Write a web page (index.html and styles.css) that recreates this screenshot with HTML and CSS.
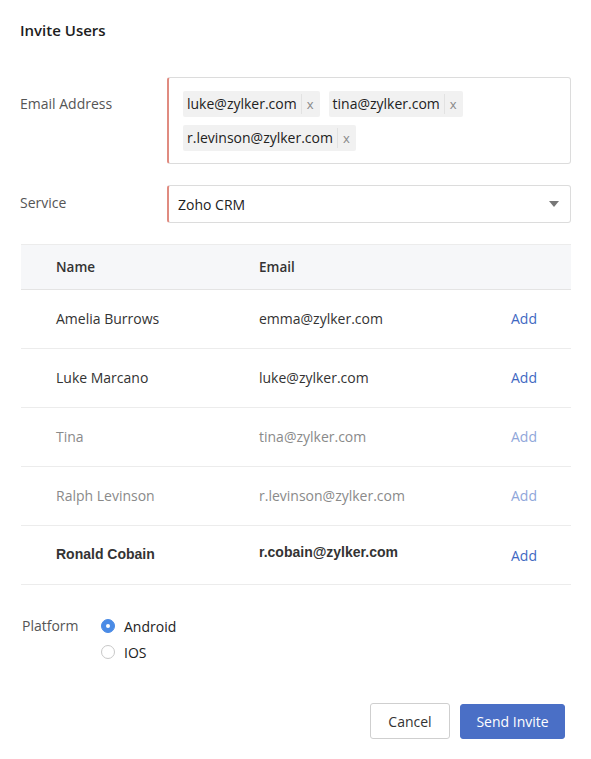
FILE: index.html
```html
<!DOCTYPE html>
<html>
<head>
<meta charset="utf-8">
<link rel="stylesheet" href="styles.css">
</head>
<body>
<div class="dialog">
  <h1 class="title">Invite Users</h1>

  <div class="field field-email">
    <label class="label">Email Address</label>
    <div class="control tags">
      <span class="chip"><span class="chip-text">luke@zylker.com</span><span class="chip-x">x</span></span>
      <span class="chip"><span class="chip-text">tina@zylker.com</span><span class="chip-x">x</span></span>
      <span class="chip"><span class="chip-text">r.levinson@zylker.com</span><span class="chip-x">x</span></span>
    </div>
  </div>

  <div class="field field-service">
    <label class="label">Service</label>
    <div class="control select">
      <span>Zoho CRM</span>
      <svg class="caret" width="10" height="6" viewBox="0 0 10 6"><path d="M0 0h10L5 6z" fill="#777"/></svg>
    </div>
  </div>

  <div class="table">
    <div class="row head">
      <span class="c-name">Name</span>
      <span class="c-email">Email</span>
      <span class="c-act"></span>
    </div>
    <div class="row">
      <span class="c-name">Amelia Burrows</span>
      <span class="c-email">emma@zylker.com</span>
      <span class="c-act">Add</span>
    </div>
    <div class="row">
      <span class="c-name">Luke Marcano</span>
      <span class="c-email">luke@zylker.com</span>
      <span class="c-act">Add</span>
    </div>
    <div class="row muted">
      <span class="c-name">Tina</span>
      <span class="c-email">tina@zylker.com</span>
      <span class="c-act">Add</span>
    </div>
    <div class="row muted">
      <span class="c-name">Ralph Levinson</span>
      <span class="c-email">r.levinson@zylker.com</span>
      <span class="c-act">Add</span>
    </div>
    <div class="row strong">
      <span class="c-name">Ronald Cobain</span>
      <span class="c-email">r.cobain@zylker.com</span>
      <span class="c-act">Add</span>
    </div>
  </div>

  <div class="platform">
    <span class="label">Platform</span>
    <div class="radios">
      <div class="radio on"><span class="dot"></span>Android</div>
      <div class="radio"><span class="dot"></span>IOS</div>
    </div>
  </div>

  <div class="actions">
    <button class="btn btn-cancel">Cancel</button>
    <button class="btn btn-primary">Send Invite</button>
  </div>
</div>
</body>
</html>
```

FILE: styles.css
```css
* { box-sizing: border-box; }

html, body {
  margin: 0;
  background: #fff;
}

body {
  font-family: "Open Sans", "Liberation Sans", sans-serif;
  font-size: 14px;
  color: #222;
}

.dialog {
  width: 591px;
  padding: 19px 20px 0 20px;
}

.title {
  margin: 0;
  font-size: 15px;
  font-weight: 600;
  line-height: 22px;
  color: #1d1d1d;
}

.field {
  display: flex;
  align-items: flex-start;
}

.field-email { margin-top: 36px; }
.field-service { margin-top: 21px; }

.label {
  width: 147px;
  flex: none;
  font-size: 14px;
  color: #555;
}

.field-email .label { padding-top: 17px; }
.field-service .label { padding-top: 8px; }

.control {
  flex: 1;
  border: 1px solid #dcdcdc;
  border-left: 2px solid #e08b80;
  border-radius: 3px;
  background: #fff;
}

.tags {
  height: 87px;
  padding: 13px 14px 0 14px;
  display: flex;
  flex-wrap: wrap;
  align-content: flex-start;
  column-gap: 9px;
  row-gap: 8px;
}

.chip {
  display: inline-flex;
  align-items: stretch;
  height: 26px;
  background: #f1f1f1;
  border-radius: 2px;
  font-size: 14px;
  color: #222;
}

.chip-text {
  padding: 0 4px 0 4px;
  border-right: 1px solid #e2e2e2;
  margin: 3px 0;
  line-height: 20px;
}

.chip-x {
  padding: 0 6px 0 5px;
  line-height: 26px;
  font-size: 13px;
  color: #888;
}

.select {
  height: 38px;
  padding: 0 10px 0 9px;
  display: flex;
  align-items: center;
  justify-content: space-between;
  font-size: 14px;
  color: #222;
}

.caret { margin-right: 1px; }

.table {
  margin-top: 21px;
  margin-left: 1px;
  width: 550px;
}

.row {
  display: flex;
  align-items: center;
  height: 59px;
  padding-bottom: 1px;
  border-bottom: 1px solid #ececec;
  font-size: 14px;
  color: #333;
}

.row.head {
  height: 46px;
  background: #f6f7f9;
  border-top: 1px solid #ececec;
  border-bottom: 1px solid #e4e4e4;
  font-size: 13.5px;
  font-weight: 600;
  color: #333;
}

.c-name { width: 238px; padding-left: 35px; flex: none; }
.c-email { width: 252px; flex: none; }
.c-act { color: #3f68c2; }

.row.muted { color: #8a8a8a; }
.row.muted .c-act { color: #8fa6da; }

.row.strong {
  font-family: "Liberation Sans", Arial, sans-serif;
  font-weight: 700;
  color: #333;
}
.row.strong .c-name { position: relative; top: -1px; }
.row.strong .c-email { position: relative; top: -3px; }
.row.strong .c-act {
  font-family: "Open Sans", "Liberation Sans", sans-serif;
  font-weight: 400;
  position: relative;
  top: 1px;
}

.platform {
  display: flex;
  margin-top: 31px;
  margin-left: 2px;
}

.platform .label {
  width: 79px;
  line-height: 20px;
}

.radios {
  display: flex;
  flex-direction: column;
  gap: 6px;
}

.radio {
  display: flex;
  align-items: center;
  gap: 9px;
  height: 20px;
  font-size: 14px;
  color: #222;
}

.dot {
  width: 14px;
  height: 14px;
  border-radius: 50%;
  border: 1px solid #c8c8c8;
  background: #fff;
  position: relative;
}

.radio.on .dot {
  background: #4a8be6;
  border-color: #4a8be6;
}

.radio.on .dot::after {
  content: "";
  position: absolute;
  left: 4px;
  top: 4px;
  width: 4px;
  height: 4px;
  border-radius: 50%;
  background: #fff;
}

.actions {
  display: flex;
  justify-content: flex-end;
  gap: 10px;
  margin-top: 41px;
  margin-right: 6px;
}

.btn {
  font-family: inherit;
  font-size: 14px;
  height: 36px;
  border-radius: 3px;
  cursor: pointer;
}

.btn-cancel {
  width: 80px;
  background: #fff;
  border: 1px solid #cfcfcf;
  color: #333;
}

.btn-primary {
  width: 105px;
  height: 35px;
  margin-top: 1px;
  background: #4a6fc6;
  border: 1px solid #4a6fc6;
  color: #fff;
}
```
